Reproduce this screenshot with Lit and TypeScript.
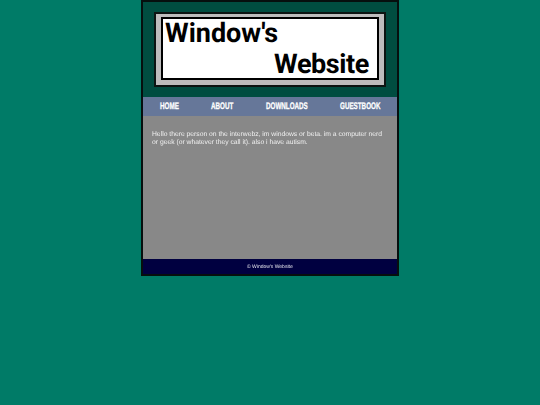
import { LitElement, html, css } from "lit";
import { customElement } from "lit/decorators.js";

@customElement("app-root")
export class AppRoot extends LitElement {
  static styles = css`
    :host { display: block; min-height: 405px; background: #007b67; font-family: "Liberation Sans", Arial, sans-serif; text-rendering: geometricPrecision; }
    .page { width: 254px; margin: 0 auto; border: 2px solid #060f0e; box-sizing: content-box; }
    .header { height: 95px; background: #004d40; display: flex; align-items: center; justify-content: center; box-sizing: border-box; }
    .logo { box-sizing: border-box; width: 232px; height: 75px; border: 2px solid #0c1412; background: #bdbdbd; padding: 3px 5px 5px; display: flex; }
    .logo-in { flex: 1; border: 2px solid #000; background: #fff; padding: 0 8px 0 2px; display: flex; flex-direction: column; justify-content: space-between; font-family: Roboto, sans-serif; font-weight: 700; font-size: 27px; line-height: 28px; color: #000; }
    .l2 { text-align: right; letter-spacing: -.4px; }
    .logo-in span { display: block; }
    nav { height: 19px; background: #667799; display: grid; grid-template-columns: 51px 55px 74px 1fr; align-items: center; padding-left: 17px; color: #fff; font-weight: 700; font-size: 9.5px; }
    nav span { display: block; white-space: nowrap; transform: scaleX(.66); transform-origin: left center; -webkit-text-stroke: .3px #fff; }
    main { height: 143px; box-sizing: border-box; background: #888888; padding: 15px 9px; color: #f0f0f0; font-size: 6.75px; line-height: 8px; }
    main p { margin: 0; will-change: transform; }
    footer { height: 15px; background: #000040; color: #e8e8f0; font-size: 5px; display: flex; align-items: center; justify-content: center; }
    footer span { will-change: transform; }
  `;
  render() {
    return html`<div class="page">
      <div class="header"><div class="logo"><div class="logo-in"><span>Window's</span><span class="l2">Website</span></div></div></div>
      <nav><span>HOME</span><span>ABOUT</span><span>DOWNLOADS</span><span>GUESTBOOK</span></nav>
      <main><p>Hello there person on the interwebz, im windows or beta. im a computer nerd or geek (or whatever they call it). also i have autism.</p></main>
      <footer><span>© Window's Website</span></footer>
    </div>`;
  }
}
